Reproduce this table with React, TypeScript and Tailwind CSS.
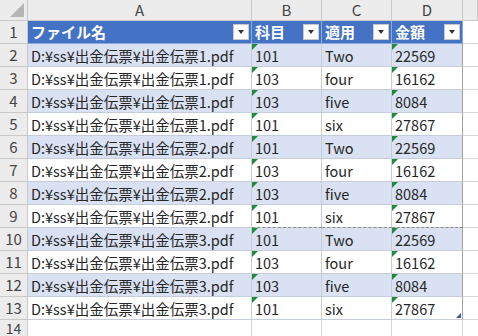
import React from 'react';

const font = { fontFamily: '"Noto Sans CJK JP", "Liberation Sans", sans-serif' };

const base = [
  ['101', 'Two', '22569'],
  ['103', 'four', '16162'],
  ['103', 'five', '8084'],
  ['101', 'six', '27867'],
];

const rows = [1, 2, 3].flatMap((n) =>
  base.map(([code, memo, amount]) => ({ file: `D:¥ss¥出金伝票¥出金伝票${n}.pdf`, code, memo, amount }))
);

const GreenMark = () => (
  <span className="absolute left-0 top-0 w-0 h-0 border-t-[6px] border-r-[6px] border-t-[#1f8a3a] border-r-transparent" />
);

// page break line under row 9
const PageBreak = () => (
  <span className="absolute left-0 right-[-1px] bottom-[-1px] border-t border-dashed border-[#8c8c8c]" />
);

const FilterButton = () => (
  <span className="absolute right-[2px] top-[3px] w-4 h-4 bg-white border border-[#c8c8c8] flex items-center justify-center">
    <span className="w-0 h-0 border-l-[3px] border-r-[3px] border-t-[4px] border-l-transparent border-r-transparent border-t-[#333]" />
  </span>
);

const ColHead: React.FC<{ label?: string }> = ({ label }) => (
  <div className="h-[21px] bg-[#ececec] border-r border-b border-[#c9c9c9] flex items-center justify-center text-[15px] text-[#444]">
    {label}
  </div>
);

const App: React.FC = () => {
  return (
    <div className="w-[478px] h-[336px] overflow-hidden bg-white text-[#222]" style={font}>
      <div className="grid grid-cols-[28px_224px_70px_70px_71px_1fr]">
        {/* column letters */}
        <div className="h-[21px] bg-[#ececec] border-r border-b border-[#c9c9c9] relative">
          <span className="absolute right-[3px] bottom-[3px] w-0 h-0 border-b-[14px] border-l-[14px] border-b-[#b5b5b5] border-l-transparent" />
        </div>
        <ColHead label="A" />
        <ColHead label="B" />
        <ColHead label="C" />
        <ColHead label="D" />
        <ColHead />

        {/* table header */}
        <div className="h-[23px] bg-[#ececec] border-r border-b border-[#c9c9c9] flex items-center justify-center text-[15px] text-[#444]">1</div>
        {['ファイル名', '科目', '適用', '金額'].map((h) => (
          <div key={h} className="h-[23px] relative bg-[#4472c4] border-r border-b border-[#8ea9db] pl-[3px] flex items-center text-[15px] font-bold text-white">
            {h}
            <FilterButton />
          </div>
        ))}
        <div className="h-[23px] border-b border-[#d4d4d4]" />

        {rows.map((r, i) => {
          const band = i % 2 === 0;
          const bg = band ? 'bg-[#d9e1f2]' : 'bg-white';
          const dashed = i === 7;
          const cell = `h-[23px] relative ${bg} border-r border-b border-[#c6ccd8] pl-[3px] pt-[2px] flex items-center text-[14.5px] text-[#262626] whitespace-nowrap`;
          return (
            <React.Fragment key={i}>
              <div className="h-[23px] bg-[#ececec] border-r border-b border-[#c9c9c9] flex items-center justify-center text-[15px] text-[#444]">
                {i + 2}
              </div>
              <div className={cell}>{r.file}</div>
              <div className={cell}>
                <GreenMark />
                {r.code}
                {dashed && <PageBreak />}
              </div>
              <div className={cell}>
                {r.memo}
                {dashed && <PageBreak />}
              </div>
              <div className={`${cell} border-r-[#a0a0a0]`}>
                <GreenMark />
                {r.amount}
                {dashed && <PageBreak />}
                {i === rows.length - 1 && (
                  <span className="absolute right-[1px] bottom-[1px] w-0 h-0 border-b-[5px] border-l-[5px] border-b-[#3a55a4] border-l-transparent" />
                )}
              </div>
              <div className="h-[23px] border-b border-[#d4d4d4]" />
            </React.Fragment>
          );
        })}

        <div className="h-[16px] bg-[#ececec] border-r border-[#c9c9c9] flex items-center justify-center text-[14px] leading-[16px] text-[#444]">14</div>
        <div className="h-[16px] border-r border-[#d4d4d4]" />
        <div className="h-[16px] border-r border-[#d4d4d4]" />
        <div className="h-[16px] border-r border-[#d4d4d4]" />
        <div className="h-[16px] border-r border-[#d4d4d4]" />
        <div className="h-[16px]" />
      </div>
    </div>
  );
};

export default App;
